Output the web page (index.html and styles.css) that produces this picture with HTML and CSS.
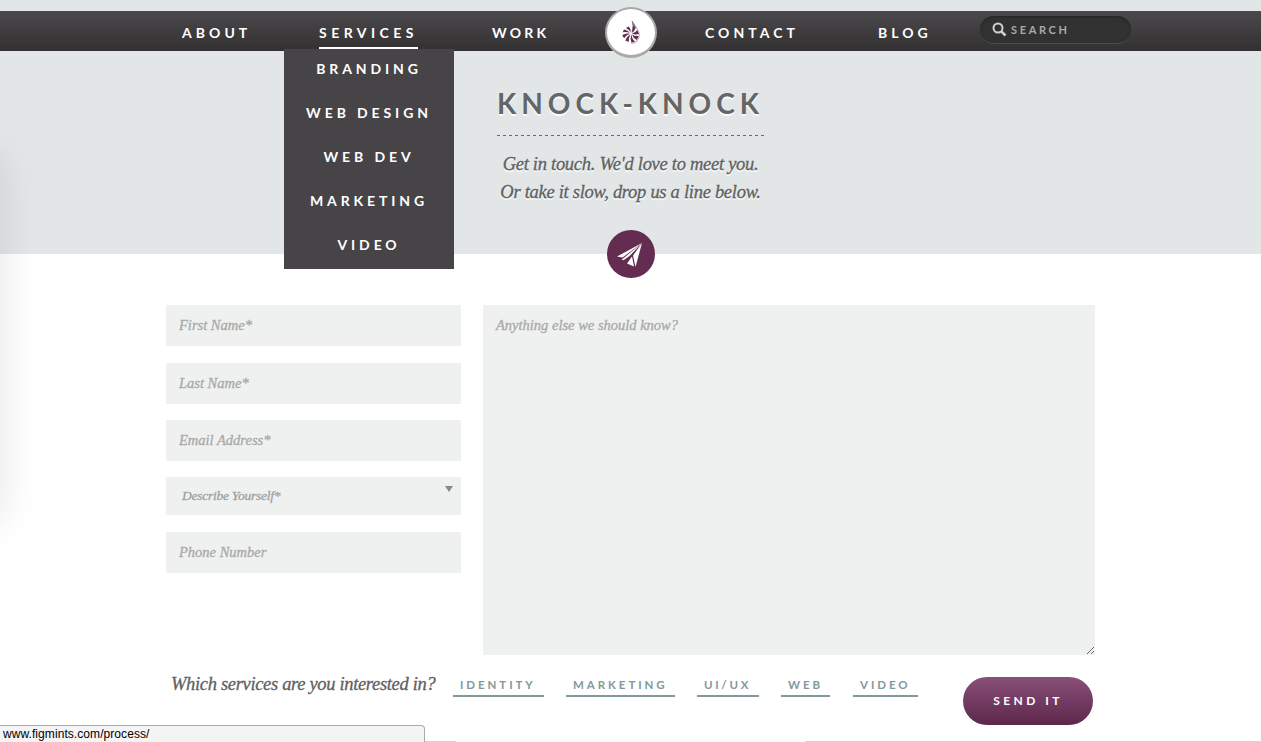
FILE: index.html
```html
<!DOCTYPE html>
<html lang="en">
<head>
<meta charset="utf-8">
<title>Knock-Knock</title>
<link rel="stylesheet" href="styles.css">
</head>
<body>
<div class="page">
  <div class="side-shadow"></div>
  <header class="bar">
    <a class="nav-item"><span>ABOUT</span></a>
    <div class="nav-item has-menu"><span class="current">SERVICES</span>
      <div class="menu">
        <a>BRANDING</a><a>WEB DESIGN</a><a>WEB DEV</a><a>MARKETING</a><a>VIDEO</a>
      </div>
    </div>
    <a class="nav-item work"><span>WORK</span></a>
    <a class="logo">
      <svg width="20" height="26" viewBox="0 0 20 26">
        <path d="M11 2C12.500 7 18.300 9.500 18.300 16A8 8 0 0 1 10 24.300" fill="none" stroke="#c4bcc2" stroke-width="1.200"/>
        <path d="M10.600 12.500Q12.500 7 10.800 1.500Q14.500 6 15 9Q13.500 11.500 10.600 12.500Z" fill="#8b6a80"/>
        <g fill="#632c50">
          <path d="M10.600 14Q12.500 10 12 6.500L14 8.500Q14 12 10.600 14Z"/>
          <path d="M11 14.500Q15 13.500 16.200 11L18 15Q14.500 16 11 14.500Z"/>
          <path d="M11 15.200Q14 17.500 17.800 17L15.800 21Q12 19 11 15.200Z"/>
          <path d="M10.200 15.500Q11 20 14 22.500L10.500 23.800Q8.800 20 10.200 15.500Z"/>
          <path d="M9.500 15.300Q7.300 19 7.800 23L4.300 21.500Q5.500 17.500 9.500 15.300Z"/>
          <path d="M9 14.800Q5 16 3 19.300L1.200 16Q5 13.700 9 14.800Z"/>
          <path d="M9 14Q5.500 12.500 1.700 13.300L3 10.500Q7 11 9 14Z"/>
          <path d="M9.800 13.500Q8.300 10.500 5 9L7.700 7.500Q10.200 10 9.800 13.500Z"/>
        </g>
      </svg>
    </a>
    <a class="nav-item"><span>CONTACT</span></a>
    <a class="nav-item"><span>BLOG</span></a>
    <div class="search">
      <svg width="15" height="15" viewBox="0 0 15 15" fill="none" stroke="#d0d0d0"><circle cx="6" cy="6" r="4.500" stroke-width="2"/><path d="M9.300 9.300L13.500 13.500" stroke-width="2.600"/></svg>
      <span>SEARCH</span>
    </div>
  </header>
  <section class="hero">
    <h1>KNOCK-KNOCK</h1>
    <svg class="rule" width="267" height="1"><path d="M0 .5H267" stroke="#666a6a" stroke-dasharray="3 3"/></svg>
    <p>Get in touch. We'd love to meet you.</p>
    <p>Or take it slow, drop us a line below.</p>
    <div class="badge">
      <svg width="48" height="48" viewBox="0 0 48 48" fill="#fff">
        <path d="M35 13L10 26.500L15.500 27.500Z"/>
        <path d="M35 13L14.500 29.800L16.500 30.200L22.500 26Z"/>
        <path d="M35 13L26 25.500L28.500 37Z"/>
        <path d="M25 26.500L20 33.500L27 36.500Z"/>
      </svg>
    </div>
  </section>
  <form class="contact">
    <div class="fields">
      <input type="text" placeholder="First Name*">
      <input type="text" placeholder="Last Name*">
      <input type="text" placeholder="Email Address*">
      <div class="select"><span>Describe Yourself*</span><i></i></div>
      <input type="text" placeholder="Phone Number">
    </div>
    <textarea placeholder="Anything else we should know?"></textarea>
  </form>
  <div class="services">
    <p class="question">Which services are you interested in?</p>
    <a class="identity">IDENTITY</a>
    <a class="marketing">MARKETING</a>
    <a class="uiux">UI/UX</a>
    <a class="web">WEB</a>
    <a class="video">VIDEO</a>
    <button type="button">SEND IT</button>
  </div>
  <div class="footer-line"><i></i><i></i></div>
  <div class="status">www.figmints.com/process/</div>
</div>
</body>
</html>
```

FILE: styles.css
```css
* { box-sizing: border-box; }
body { margin: 0; background: #fff; font-family: Lato, sans-serif; }
.page { position: relative; width: 1261px; height: 742px; overflow: hidden; background: #fff; padding-top: 11px; }
.page::before { content: ""; position: absolute; left: 0; top: 0; width: 100%; height: 254px; background: #e2e6e6; }
.side-shadow { position: absolute; left: -100px; top: 155px; width: 100px; height: 365px; box-shadow: 0 0 40px rgba(0,0,0,.11); }

.bar { position: relative; z-index: 3; height: 40px; padding-left: 182px; display: grid; grid-template-columns: 137px 173px 113px 100px 173px 102px 151px; background: linear-gradient(#4b494c, #333031); color: #fff; font-weight: 700; }
.nav-item { font-size: 14px; line-height: 20px; letter-spacing: 4.050px; padding-top: 12px; white-space: nowrap; }
.nav-item.work { letter-spacing: 3.200px; }
.has-menu { position: relative; }
.current { display: inline-block; height: 26px; border-bottom: 2px solid #fff; letter-spacing: 4.450px; }
.menu { position: absolute; left: -35px; top: 38px; width: 170px; background: #474447; letter-spacing: 3.900px; }
.menu a { display: block; height: 44px; line-height: 40px; text-align: center; }
.logo { width: 52px; height: 51px; margin-top: -4px; border-radius: 50%; background: #fff; border: 2px solid #aaa8a9; border-bottom-width: 3px; display: flex; justify-content: center; align-items: center; }
.search { height: 28px; margin-top: 5px; border-radius: 14px; background: #323131; border-bottom: 1px solid #4d4b4c; box-shadow: inset 0 1px 2px #242323; display: flex; align-items: center; padding-left: 12px; gap: 4px; font-size: 11px; letter-spacing: 2.650px; color: #aaa; }

.hero { position: relative; height: 203px; display: flex; flex-direction: column; align-items: center; color: #636566; text-shadow: 0 2px 1px rgba(255,255,255,.9); }
.hero h1 { margin: 34px 0 0; font-size: 28px; line-height: 36px; letter-spacing: 5px; font-weight: 700; }
.rule { margin: 14px 0 14px; }
.hero p, .question { margin: 0; font: italic 18.500px/28px "Liberation Serif", serif; letter-spacing: -.28px; white-space: nowrap; color: #5f6162; -webkit-text-stroke: .3px #5f6162; }
.badge { position: absolute; left: 607px; bottom: -24px; width: 48px; height: 48px; border-radius: 50%; background: #632c50; }

.contact { position: relative; margin: 51px 0 0 166px; width: 929px; height: 350px; display: flex; gap: 22px; }
.fields { width: 295px; display: flex; flex-direction: column; gap: 16px; }
input, textarea, .select { border: 0; border-radius: 0; outline: 0; background: #eff1f0; font: italic 14.500px/20px "Liberation Serif", serif; color: #a9a9a9; -webkit-text-stroke: .3px #a9a9a9; }
input { width: 295px; height: 41px; padding: 0 13px; flex: none; }
input:first-child, .select { margin-bottom: 1px; }
::placeholder { color: #a9a9a9; opacity: 1; }
.select { height: 38px; padding: 9px 8px 0 16px; display: flex; justify-content: space-between; font-size: 13.500px; letter-spacing: -.25px; color: #999; }
.select i { width: 0; height: 0; border: 4px solid transparent; border-top: 6px solid #888; border-bottom: 0; }
textarea { width: 612px; height: 350px; padding: 10px 13px; display: block; margin: 0; }

.services { position: relative; margin-left: 171px; display: flex; align-items: flex-start; height: 70px; }
.question { width: 282px; padding-top: 15px; letter-spacing: -.33px; }
.services a { height: 42px; padding-top: 20px; line-height: 20px; border-bottom: 2px solid #82999a; margin-right: 22px; padding-left: 7px; font-size: 11.500px; font-weight: 700; letter-spacing: 2.930px; color: #82999a; white-space: nowrap; }
.services .identity { width: 91px; }
.services .marketing { width: 109px; }
.services .uiux { width: 62px; letter-spacing: 2.700px; }
.services .web { width: 49px; margin-right: 23px; }
.services .video { width: 65px; }
button { margin: 22px 0 0 23px; width: 130px; height: 48px; border: 0; border-radius: 24px; background: linear-gradient(#895079, #5d274a); color: #fff; font: 700 12px Lato, sans-serif; letter-spacing: 3.450px; padding: 0 0 1px; }
.footer-line { position: absolute; left: 0; right: 0; bottom: 0; height: 1px; display: flex; justify-content: space-between; }
.footer-line i { width: 456px; background: #d5d5d5; }
.status { position: absolute; left: 0; bottom: 0; width: 425px; height: 17px; border: 1px solid #aaa; border-width: 1px 1px 0 0; border-radius: 0 4px 0 0; background: #f4f4f4; font: 12px/16px "Liberation Sans", sans-serif; letter-spacing: .07px; color: #000; padding-left: 3px; }
```
